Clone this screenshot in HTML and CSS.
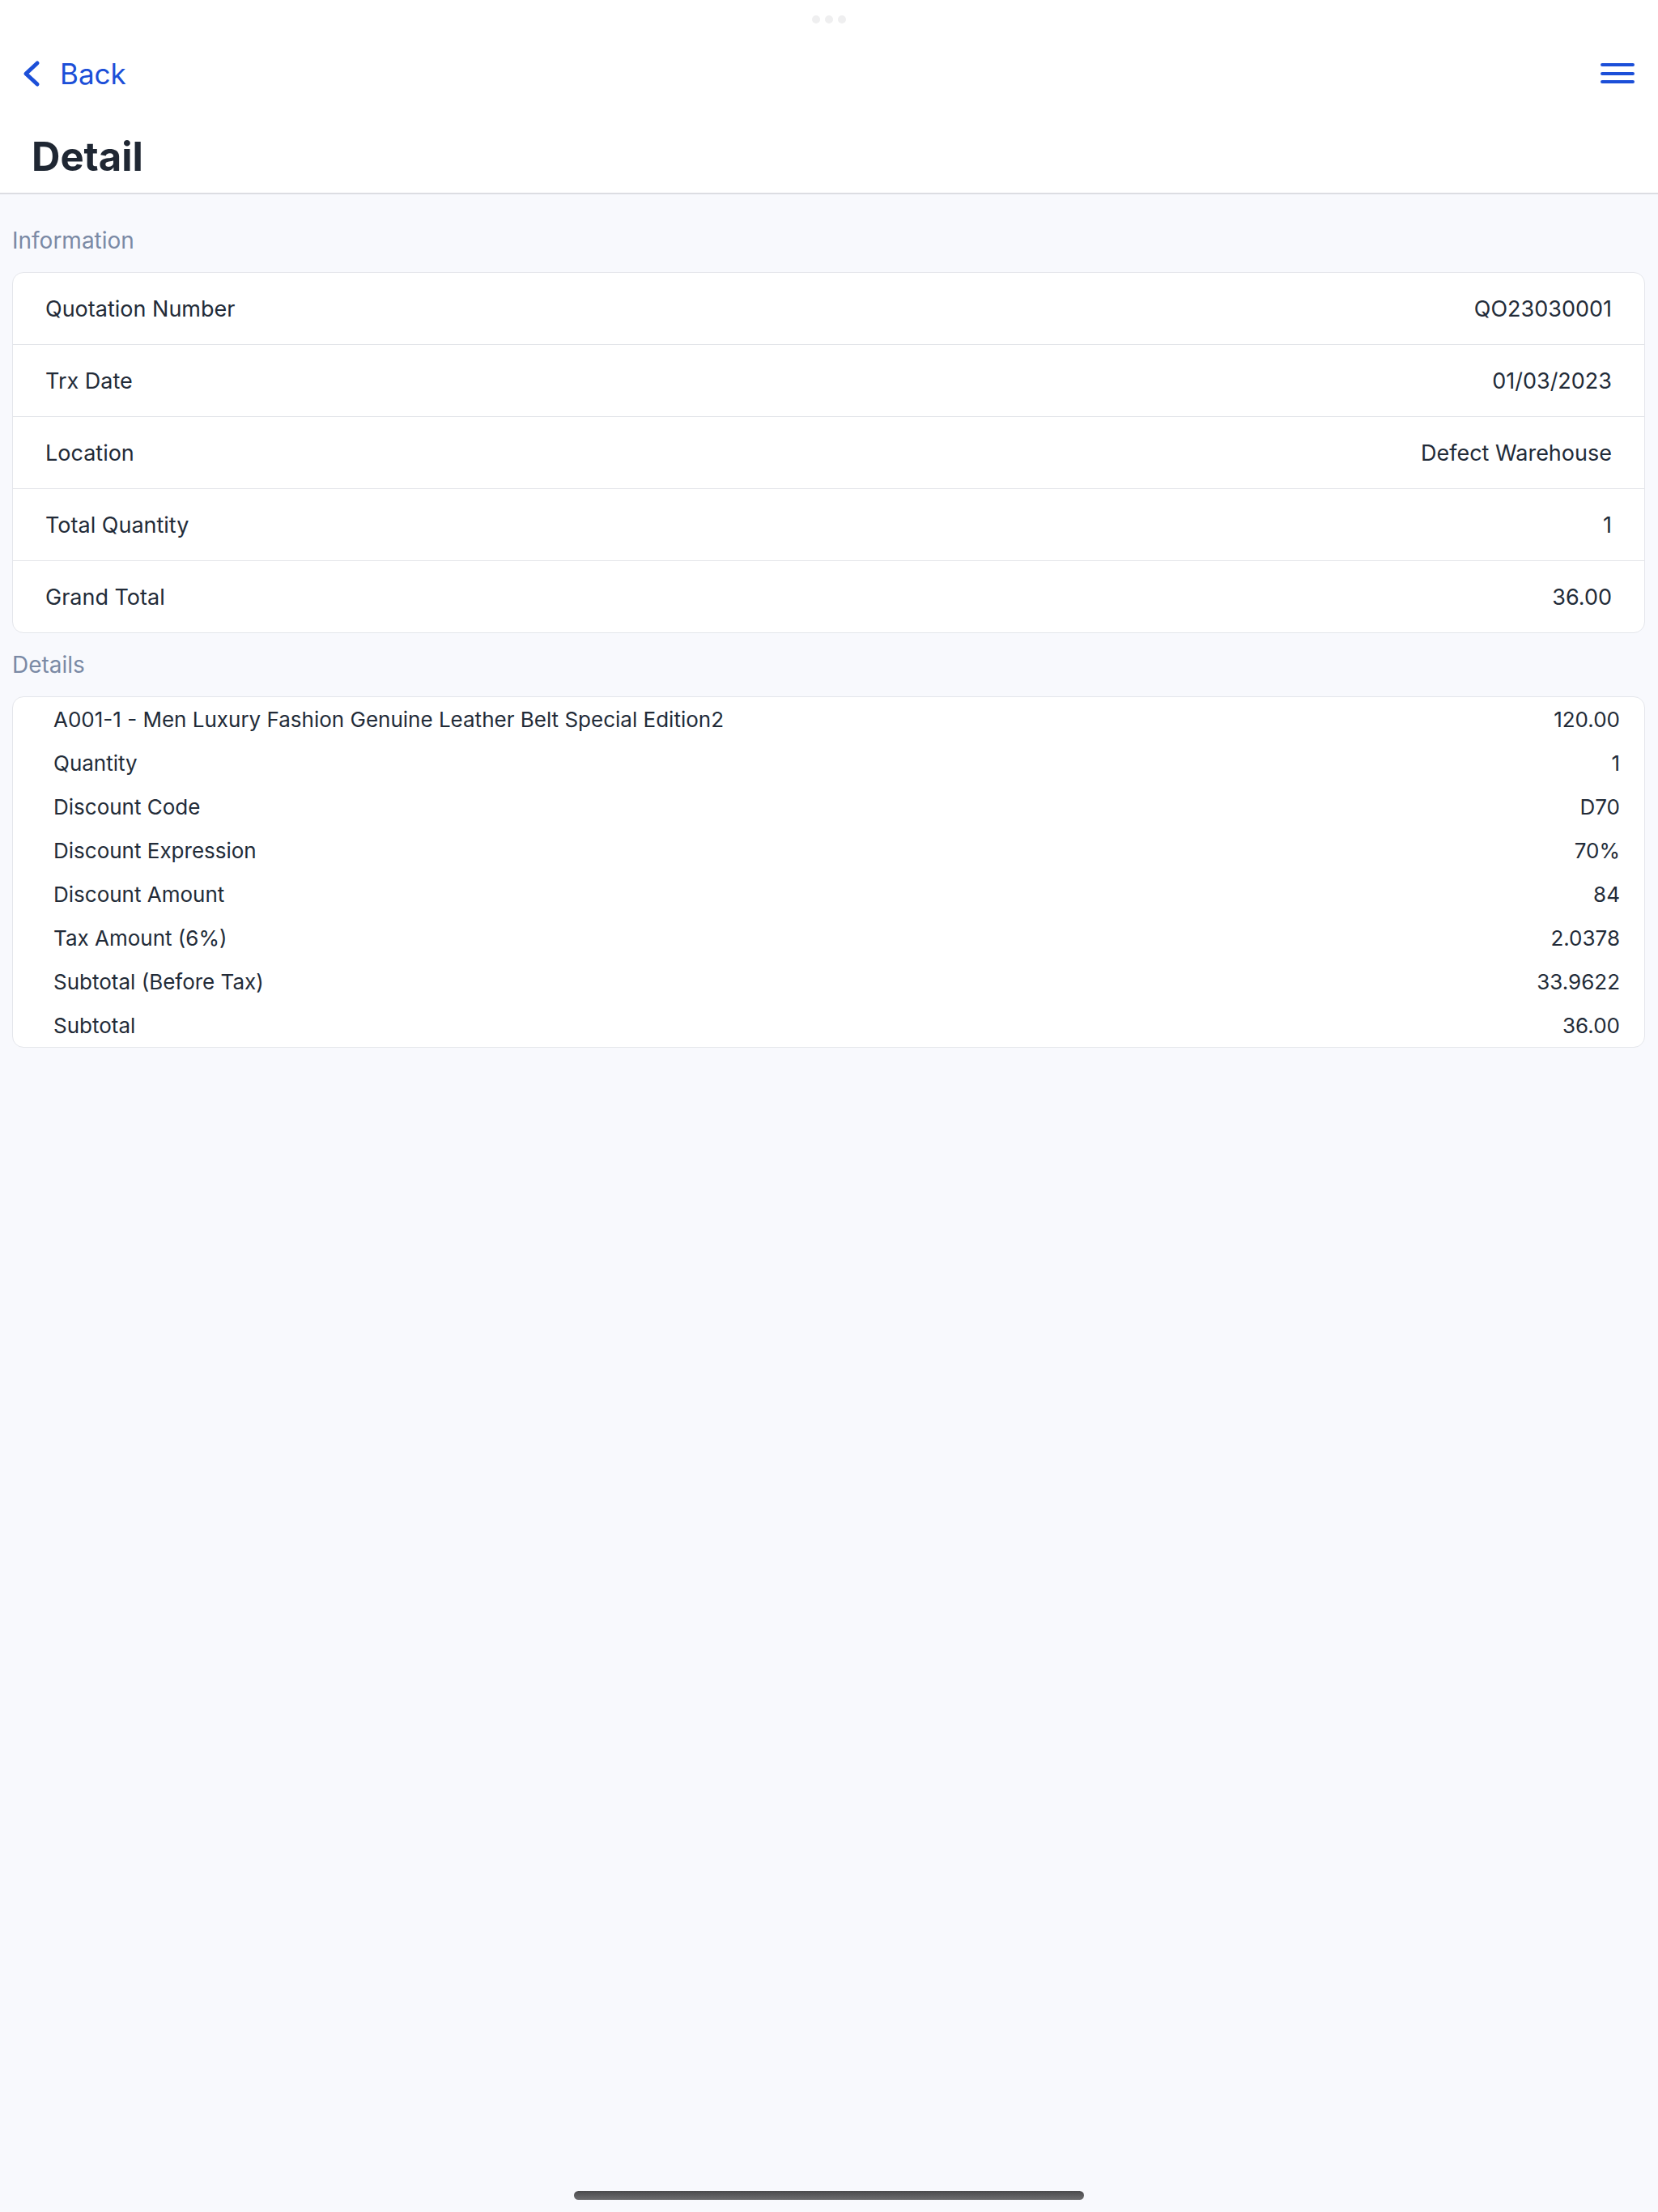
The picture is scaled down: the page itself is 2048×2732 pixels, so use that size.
FILE: index.html
```html
<!DOCTYPE html>
<html lang="en">
<head>
    <meta charset="UTF-8">
    <meta name="viewport" content="width=device-width, initial-scale=1.0">
    <title>Detail</title>
    <link rel="stylesheet" href="styles.css">
</head>
<body>
    <div class="dots"><span></span><span></span><span></span></div>

    <header class="header">
        <div class="nav">
            <a class="back" href="#">
                <svg width="26" height="38" viewBox="0 0 26 38"><path d="M20 6 L6 19 L20 32" fill="none" stroke="currentColor" stroke-width="5" stroke-linecap="round" stroke-linejoin="round"/></svg>
                Back
            </a>
            <button class="menu">
                <svg width="46" height="30" viewBox="0 0 46 30"><path d="M4 4 H42 M4 15 H42 M4 25 H42" stroke="currentColor" stroke-width="4" stroke-linecap="round"/></svg>
            </button>
        </div>
        <h1 class="title">Detail</h1>
    </header>

    <main class="content">
        <h2 class="section-title">Information</h2>
        <div class="card info">
            <div class="row"><span>Quotation Number</span><span>QO23030001</span></div>
            <div class="row"><span>Trx Date</span><span>01/03/2023</span></div>
            <div class="row"><span>Location</span><span>Defect Warehouse</span></div>
            <div class="row"><span>Total Quantity</span><span>1</span></div>
            <div class="row"><span>Grand Total</span><span>36.00</span></div>
        </div>

        <h2 class="section-title">Details</h2>
        <div class="card details">
            <div class="row"><span>A001-1 - Men Luxury Fashion Genuine Leather Belt Special Edition2</span><span>120.00</span></div>
            <div class="row"><span>Quantity</span><span>1</span></div>
            <div class="row"><span>Discount Code</span><span>D70</span></div>
            <div class="row"><span>Discount Expression</span><span>70%</span></div>
            <div class="row"><span>Discount Amount</span><span>84</span></div>
            <div class="row"><span>Tax Amount (6%)</span><span>2.0378</span></div>
            <div class="row"><span>Subtotal (Before Tax)</span><span>33.9622</span></div>
            <div class="row"><span>Subtotal</span><span>36.00</span></div>
        </div>
    </main>

    <div class="home-bar"></div>
</body>
</html>
```

FILE: styles.css
```css
body {
    font-family: Inter, "Noto Sans", sans-serif;
    margin: 0;
    min-height: 100vh;
    background-color: #f8f9fd;
    color: #222b38;
}
.dots {
    position: absolute;
    top: 19px;
    left: 0;
    right: 0;
    display: flex;
    justify-content: center;
    gap: 6px;
}
.dots span {
    width: 10px;
    height: 10px;
    border-radius: 50%;
    background: #efeff0;
}
.header {
    background: white;
    padding: 50px 0 14px;
    border-bottom: 2px solid #dcdde2;
}
.nav {
    height: 82px;
    display: flex;
    align-items: center;
    justify-content: space-between;
    padding: 0 27px 0 26px;
}
.back {
    display: flex;
    align-items: center;
    gap: 22px;
    color: #1c4fd8;
    text-decoration: none;
    font-size: 35px;
}
.menu {
    background: none;
    border: none;
    padding: 0;
    color: #1c4fd8;
    display: flex;
}
.title {
    margin: 32px 0 0;
    padding-left: 39px;
    font-size: 49px;
    line-height: 60px;
    font-weight: 700;
    color: #1f2733;
}
.content {
    padding: 18px 16px 0 15px;
}
.section-title {
    margin: 21px 0 21px;
    font-size: 28px;
    line-height: 36px;
    font-weight: 400;
    color: #7b8aa5;
}
.card {
    background: white;
    border: 1px solid #e4e6eb;
    border-radius: 14px;
}
.row {
    display: flex;
    justify-content: space-between;
    align-items: center;
}
.info .row {
    height: 88px;
    padding: 0 40px;
    font-size: 27px;
    border-bottom: 1px solid #e3e5e9;
}
.info .row:last-child {
    border-bottom: none;
}
.details .row {
    height: 54px;
    padding: 0 30px 0 50px;
    font-size: 26px;
}
.home-bar {
    position: fixed;
    bottom: 15px;
    left: 709px;
    width: 630px;
    height: 11px;
    border-radius: 6px;
    background: linear-gradient(#4a4a4c, #6e6e70);
}
```
